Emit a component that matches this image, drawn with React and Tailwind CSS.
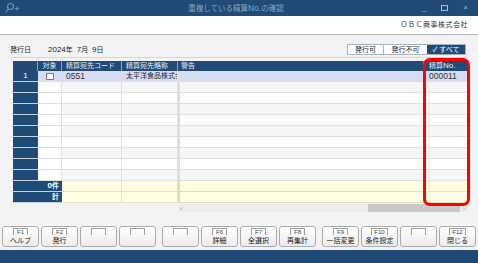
import React from "react";

const keys = [
  [["F1", "ヘルプ"], ["F2", "発行"], ["", ""], ["", ""]],
  [["", ""], ["F6", "詳細"], ["F7", "全選択"], ["F8", "再集計"]],
  [["F9", "一括変更"], ["F10", "条件設定"], ["", ""], ["F12", "閉じる"]],
];

function FKey({ k, label }) {
  return (
    <div className="w-[37px] h-[21px] rounded-[3px] border border-[#ababab] bg-gradient-to-b from-white to-[#ececec] flex flex-col items-center pt-[1px]">
      <div className="min-w-[15px] h-[7px] px-[2px] border-t border-x border-[#a0a0a0] text-[6px] leading-[7px] text-[#444] text-center">
        {k}
      </div>
      <div className="text-[7px] leading-[10px] text-[#222] mt-[1px] whitespace-nowrap">{label}</div>
    </div>
  );
}

function DataRow({ i }) {
  const first = i === 0;
  const alt = i % 2 === 1;
  const bg = first ? "bg-[#d5ddf3]" : alt ? "bg-[#f6f6f6]" : "bg-white";
  return (
    <div className="flex h-[11px]">
      <div className="w-[25px] shrink-0 bg-[#1f4b76] border-b border-[#c9d2de] text-white text-[8px] leading-[10px] text-center">
        {first ? "1" : ""}
      </div>
      <div className={"w-[24px] shrink-0 border-b border-r border-[#e0e0e0] flex items-center justify-center " + (first ? "bg-[#d5ddf3]" : "bg-white")}>
        {first && <div className="w-[8px] h-[7px] bg-white border border-[#7a7a7a]" />}
      </div>
      <div className={"w-[60px] shrink-0 border-b border-r border-[#e0e0e0] pl-[4px] text-[8.5px] leading-[10px] text-[#333] " + bg}>
        {first ? "0551" : ""}
      </div>
      <div className={"w-[56px] shrink-0 border-b border-r border-[#e0e0e0] pl-[4px] text-[7px] leading-[10px] text-[#222] overflow-hidden whitespace-nowrap " + bg}>
        {first ? "太平洋食品株式会社" : ""}
      </div>
      <div className={"w-[246px] shrink-0 border-b border-l-2 border-r border-[#dedede] " + bg} />
      <div className={"w-[44px] shrink-0 border-b border-[#e0e0e0] pl-[5px] text-[8.5px] leading-[10px] text-[#333] " + bg}>
        {first ? "000011" : ""}
      </div>
    </div>
  );
}

function TotalRow({ label }) {
  return (
    <div className="flex h-[11px]">
      <div className="w-[49px] shrink-0 bg-[#1f4b76] border-b border-[#c9d2de] text-white text-[7px] leading-[10px] text-right pr-[3px] font-bold">
        {label}
      </div>
      <div className="w-[60px] shrink-0 bg-[#fffde2] border-b border-r border-[#e6e3c8]" />
      <div className="w-[56px] shrink-0 bg-[#fffde2] border-b border-r border-[#e6e3c8]" />
      <div className="w-[246px] shrink-0 bg-[#fffde2] border-b border-l-2 border-r border-[#dedbc4]" />
      <div className="w-[44px] shrink-0 bg-[#fffde2] border-b border-[#e6e3c8]" />
    </div>
  );
}

export default function App() {
  return (
    <div className="w-[478px] h-[263px] relative overflow-hidden flex flex-col bg-[#f3f3f3] font-['Liberation_Sans','Noto_Sans_CJK_JP',sans-serif]">
      {/* title bar */}
      <div className="h-[16px] shrink-0 bg-[#1f4b76] flex items-center px-[4px] text-[#8aa3bf]">
        <svg width="16" height="12" viewBox="0 0 16 12" fill="none" stroke="#6f90b4" strokeWidth="1.2">
          <circle cx="6.5" cy="4.5" r="3" />
          <path d="M4.3 6.8 L1.5 10.5" />
          <path d="M11 6.5 h4 M13 4.5 v4" />
        </svg>
        <div className="flex-1 text-center text-[7.5px] leading-[16px] pl-[30px]">
          重複している精算<span className="text-[8.5px]">No.</span>の確認
        </div>
        <div className="flex items-center gap-[15px] pr-[6px] text-[8px] text-[#a9bbcf]">
          <span>_</span>
          <span className="w-[7px] h-[6px] border border-[#a9bbcf]" />
          <span>×</span>
        </div>
      </div>

      {/* company */}
      <div className="h-[19px] shrink-0 bg-white border-b border-[#b9b9b9] flex items-center justify-end pr-[10px] text-[7px] text-[#333] tracking-[0.5px]">
        ＯＢＣ商事株式会社
      </div>

      {/* date + filter */}
      <div className="h-[23px] shrink-0 mx-[10px] border-b border-[#d6d6d6] flex items-end pb-[2px]">
        <div className="flex items-center h-[11px] text-[7px] text-[#222] pt-[1px]">
          <span className="w-[38px]">発行日</span>
          <span className="whitespace-pre">
            <span className="text-[8px]">2024</span>年  <span className="text-[8px]">7</span>月  <span className="text-[8px]">9</span>日
          </span>
        </div>
        <div className="ml-auto flex h-[11px] border border-[#9fb2c8] bg-white text-[7px] leading-[9px] mr-[2px]">
          <div className="w-[36px] text-center text-[#222] border-r border-[#9fb2c8]">発行可</div>
          <div className="w-[43px] text-center text-[#222]">発行不可</div>
          <div className="w-[38px] text-center text-white bg-[#1f4b76]">✓ すべて</div>
        </div>
      </div>

      {/* grid */}
      <div className="ml-[13px] mt-[3px] w-[455px] flex flex-col">
        <div className="flex h-[10px] bg-[#1f4b76] text-[#e8eef5] text-[7px] leading-[10px]">
          <div className="w-[25px] shrink-0 border-r border-[#8ea3bb]" />
          <div className="w-[24px] shrink-0 border-r border-[#8ea3bb] text-center">対象</div>
          <div className="w-[60px] shrink-0 border-r border-[#8ea3bb] pl-[4px]">精算宛先コード</div>
          <div className="w-[56px] shrink-0 border-r border-[#8ea3bb] pl-[4px]">精算宛先略称</div>
          <div className="w-[246px] shrink-0 border-r border-[#8ea3bb] pl-[3px]">警告</div>
          <div className="w-[44px] shrink-0 pl-[5px]">精算<span className="text-[8px]">No.</span></div>
        </div>
        {Array.from({ length: 10 }).map((_, i) => (
          <DataRow key={i} i={i} />
        ))}
        <TotalRow label={<><span className="text-[8px]">0</span>件</>} />
        <TotalRow label="計" />
        <div className="flex h-[8px] mt-[1px]">
          <div className="w-[165px] shrink-0" />
          <div className="flex-1 bg-[#ebebeb] flex items-center text-[6px] leading-[8px] text-[#999]">
            <span className="pl-[2px]">‹</span>
            <div className="ml-auto w-[92px] h-[8px] bg-[#c9c9c9]" />
            <span className="w-[8px] text-center">›</span>
          </div>
        </div>
      </div>

      {/* function keys */}
      <div className="mt-[14px] pl-[2px] flex gap-[6px]">
        {keys.map((g, gi) => (
          <div key={gi} className="flex gap-[2px]">
            {g.map(([k, l], ki) => (
              <FKey key={ki} k={k} label={l} />
            ))}
          </div>
        ))}
      </div>

      <div className="mt-auto h-[13px] shrink-0 bg-[#1f4b76]" />

      {/* highlight */}
      <div className="absolute left-[423px] top-[58px] w-[47px] h-[148px] border-[3px] border-[#ff0000] rounded-[7px]" />
    </div>
  );
}
